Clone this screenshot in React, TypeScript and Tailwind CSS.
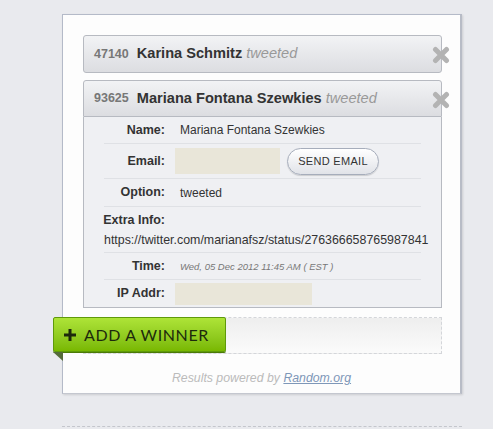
import React from "react";

function XIcon() {
  return (
    <svg width="18" height="18" viewBox="0 0 18 18" className="absolute right-[-9px] top-[10px]">
      <path d="M3.5 3.5 L14.5 14.5 M14.5 3.5 L3.5 14.5" stroke="#b3b3b3" strokeWidth="5" strokeLinecap="round" />
    </svg>
  );
}

function Row({ label, children, last, h }: { label: string; children: React.ReactNode; last?: boolean; h: string }) {
  return (
    <div className={`flex items-center ${h} ${last ? "" : "border-b border-[#dfe1e5]"}`}>
      <div className="w-[61px] text-right font-bold text-[12.5px] text-[#333] whitespace-nowrap">{label}</div>
      <div className="pl-[10px] flex-1">{children}</div>
    </div>
  );
}

export default function App() {
  return (
    <div
      className="w-[493px] h-[429px] overflow-hidden bg-[#e9eaee] relative"
      style={{ fontFamily: '"Liberation Sans", Arial, sans-serif' }}
    >
      <div className="ml-[62px] mt-[14px] w-[400px] h-[380px] bg-[#fdfdfd] border border-[#b4bac8] border-r-2 border-r-[#b8bcc6] border-b-[#c4c7cf] border-b-dashed shadow-[1px_1px_2px_rgba(0,0,0,0.12)] relative">
        <div className="pl-[20px] pt-[20px] w-[379px]">
          {/* item 1 */}
          <div className="relative h-[38px] rounded-[3px] border border-[#b7bac1] bg-gradient-to-b from-[#f2f3f5] to-[#dcdde1] flex items-center pl-[10px]">
            <span className="text-[12.5px] font-bold text-[#777]">47140</span>
            <span className="ml-[8px] text-[14.6px] font-bold text-[#333]">Karina Schmitz</span>
            <span className="ml-[4px] text-[14.6px] italic text-[#999]">tweeted</span>
            <XIcon />
          </div>
          {/* item 2 */}
          <div className="mt-[7px] relative">
            <div className="relative h-[37px] rounded-t-[3px] border border-[#b7bac1] bg-gradient-to-b from-[#f2f3f5] to-[#dcdde1] flex items-center pl-[10px]">
              <span className="text-[12.5px] font-bold text-[#777]">93625</span>
              <span className="ml-[8px] text-[14.6px] font-bold text-[#333]">Mariana Fontana Szewkies</span>
              <span className="ml-[4px] text-[14.6px] italic text-[#999]">tweeted</span>
              <XIcon />
            </div>
            <div className="h-[191px] border border-t-0 border-[#b7bac1] bg-[#eff0f3] px-[20px]">
              <Row label="Name:" h="h-[27px]">
                <div className="ml-[5px] text-[12px] text-[#333]">Mariana Fontana Szewkies</div>
              </Row>
              <Row label="Email:" h="h-[35px]">
                <div className="flex items-center">
                  <div className="w-[105px] h-[26px] bg-[#e9e6d9]" />
                  <button className="ml-[7px] w-[92px] h-[27px] rounded-full border border-[#a6adbb] bg-gradient-to-b from-[#ffffff] to-[#e1e3e8] shadow-[0_1px_1px_rgba(0,0,0,0.15)] text-[11px] text-[#333] tracking-[0.3px]">
                    SEND EMAIL
                  </button>
                </div>
              </Row>
              <Row label="Option:" h="h-[28px]">
                <div className="ml-[5px] text-[12px] text-[#333]">tweeted</div>
              </Row>
              <div className="border-b border-[#dfe1e5] h-[46px]">
                <div className="w-[61px] text-right font-bold text-[12.5px] text-[#333] h-[26px] flex items-center justify-end whitespace-nowrap">Extra Info:</div>
                <div className="text-[12.4px] text-[#333] leading-[14px] whitespace-nowrap">https://twitter.com/marianafsz/status/276366658765987841</div>
              </div>
              <Row label="Time:" h="h-[27px]">
                <div className="ml-[5px] pt-[3px] text-[9.5px] italic text-[#777]">Wed, 05 Dec 2012 11:45 AM ( EST )</div>
              </Row>
              <Row label="IP Addr:" h="h-[27px]" last>
                <div className="w-[137px] h-[22px] bg-[#e9e6d9]" />
              </Row>
            </div>
          </div>
          {/* dashed drop area */}
          <div className="mt-[9px] h-[37px] border border-dashed border-[#d4d6da] bg-gradient-to-b from-[#eeeeee] to-[#fbfbfb]" />
        </div>
        {/* add winner button */}
        <div className="absolute left-[-10px] top-[302px]">
          <div className="w-[173px] h-[35px] rounded-[2px] border border-[#5f9a0a] bg-gradient-to-b from-[#aee437] to-[#79b800] flex items-center pl-[10px] shadow-[0_1px_0_#4b7a06]">
            <svg width="12" height="12" viewBox="0 0 12 12">
              <path d="M4.5 0h3v4.5h4.5v3h-4.5v4.5h-3v-4.5h-4.5v-3h4.5z" fill="#1d2a0c" />
            </svg>
            <span className="ml-[8px] text-[16px] text-[#1d2a0c] tracking-[0.6px]" style={{ fontFamily: 'Lato, "Liberation Sans", sans-serif' }}>
              ADD A WINNER
            </span>
          </div>
          <svg width="10" height="9" viewBox="0 0 10 9" className="block">
            <path d="M0 0 L10 0 L10 9 Z" fill="#556b3a" />
          </svg>
        </div>
        <div className="absolute left-0 right-0 top-[354px] text-center text-[12.3px] italic text-[#bbb]">
          Results powered by <span className="underline text-[#7e97b8]">Random.org</span>
        </div>
      </div>
      <div className="absolute left-[62px] top-[426px] w-[400px] border-t border-dashed border-[#c4c6cc]" />
    </div>
  );
}
